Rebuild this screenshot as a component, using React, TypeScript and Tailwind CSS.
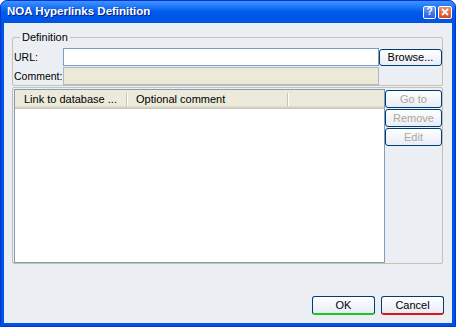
import React from 'react';

function XpButton({ label, disabled, accent, className }: { label: string; disabled?: boolean; accent?: string; className?: string }) {
    return (
        <div
            className={`flex items-center justify-center rounded-[3px] border border-[#003c74] bg-gradient-to-b from-white to-[#e8ecf6] leading-none ${
                disabled ? 'text-[#aca899]' : 'text-black'
            } ${accent ?? ''} ${className ?? ''}`}
        >
            {label}
        </div>
    );
}

export default function App() {
    return (
        <div className="h-[327px] w-[456px] bg-white font-['Liberation_Sans',Arial,sans-serif] text-[11px] text-black">
            <div className="flex h-full flex-col overflow-hidden rounded-t-[7px] border border-[#0831d9] bg-[#0054e3]">
                {/* title bar */}
                <div className="flex h-[22px] items-center bg-gradient-to-b from-[#3d95ff] via-[#0058ee] to-[#0054e3] pl-[6px] pr-[3px]">
                    <span className="flex-1 text-[11.5px] font-bold text-white [text-shadow:1px_1px_0_#0a1e7e]">
                        NOA Hyperlinks Definition
                    </span>
                    <div className="flex items-center gap-[2px]">
                        <div className="flex h-[13px] w-[13px] items-center justify-center rounded-[2px] border border-white bg-gradient-to-b from-[#6b9cff] to-[#245de0] text-[10px] font-bold leading-none text-white">
                            ?
                        </div>
                        <div className="flex h-[13px] w-[14px] items-center justify-center rounded-[2px] border border-white bg-gradient-to-b from-[#ee8d6a] to-[#cf4a20]">
                            <svg width="8" height="8" viewBox="0 0 8 8">
                                <path d="M1 1 L7 7 M7 1 L1 7" stroke="white" strokeWidth="1.8" />
                            </svg>
                        </div>
                    </div>
                </div>

                {/* client area */}
                <div className="mx-[3px] mb-[3px] flex flex-1 flex-col bg-[#ebeff3] pl-[8px] pt-[14px]">
                    {/* Definition group */}
                    <div className="relative w-[431px] rounded-[2px] border border-[#c5c2b2] pt-[10px]">
                        <span className="absolute -top-[7px] left-[7px] bg-[#ebeff3] px-[2px] leading-[13px]">Definition</span>
                        <div className="flex items-start">
                            <div className="w-[50px] shrink-0 whitespace-nowrap pl-[1px] text-[10.5px] leading-[18px]">URL:</div>
                            <div className="h-[18px] w-[316px] border border-[#7f9db9] bg-white" />
                            <XpButton label="Browse..." className="mt-[1px] h-[17px] w-[63px]" />
                        </div>
                        <div className="mt-[1px] flex items-start">
                            <div className="w-[50px] shrink-0 whitespace-nowrap pl-[1px] text-[10.5px] leading-[18px]">Comment:</div>
                            <div className="h-[18px] w-[316px] border border-[#a5b9d0] bg-[#ece9d8]" />
                        </div>
                    </div>

                    {/* links group */}
                    <div className="mt-[1px] flex w-[431px] rounded-[2px] border border-[#c5c2b2] pl-[1px] pt-[1px]">
                        <div className="h-[174px] w-[371px] border border-[#7f9db9] bg-white">
                            <div className="flex h-[19px] items-center bg-[#ebeadb] shadow-[inset_0_-1px_#cbc7b8,inset_0_-2px_#d6d2c2,inset_0_-3px_#e2decd]">
                                <div className="w-[111px] whitespace-nowrap pl-[9px]">Link to database ...</div>
                                <div className="h-[13px] w-[2px] border-l border-r border-l-[#c7c5b2] border-r-white" />
                                <div className="w-[159px] whitespace-nowrap pl-[8px]">Optional comment</div>
                                <div className="h-[13px] w-[2px] border-l border-r border-l-[#c7c5b2] border-r-white" />
                            </div>
                        </div>
                        <div className="mt-[1px] flex w-[57px] flex-col gap-[1px]">
                            <XpButton label="Go to" disabled className="h-[18px]" />
                            <XpButton label="Remove" disabled className="h-[18px]" />
                            <XpButton label="Edit" disabled className="h-[18px]" />
                        </div>
                    </div>

                    {/* dialog buttons */}
                    <div className="mt-auto flex justify-end gap-[6px] pb-[8px] pr-[8px]">
                        <XpButton label="OK" accent="border-b-2 border-b-[#21c41e]" className="h-[19px] w-[63px]" />
                        <XpButton label="Cancel" accent="border-b-2 border-b-[#e0151a]" className="h-[19px] w-[63px]" />
                    </div>
                </div>
            </div>
        </div>
    );
}
